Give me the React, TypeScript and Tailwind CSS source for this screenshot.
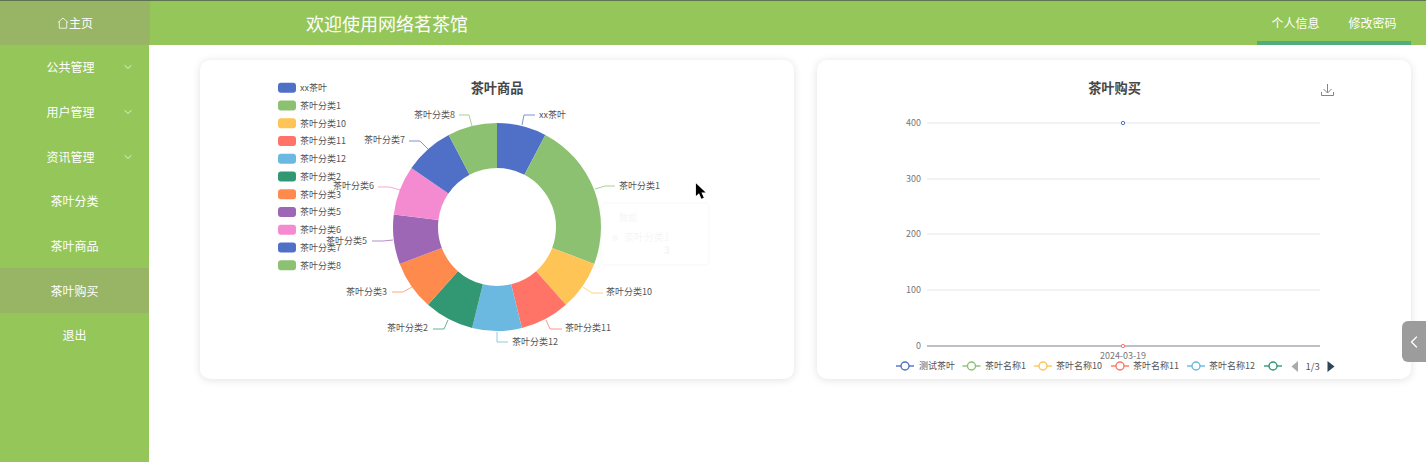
import { ChevronDown, ChevronLeft } from "lucide-react";

const menus = [
  { name: "公共管理", arrow: true },
  { name: "用户管理", arrow: true },
  { name: "资讯管理", arrow: true },
  { name: "茶叶分类" },
  { name: "茶叶商品" },
  { name: "茶叶购买", active: true },
  { name: "退出" },
];

const CX = 497;
const CY = 227;
const OUTER = 104;
const INNER = 59;

// lx/ly: label anchor, line: leader polyline
const slices = [
  { name: "xx茶叶", value: 1, color: "#5070c8", line: "522,125 524,115 535,115", lx: 539, ly: 115, anchor: "start" },
  { name: "茶叶分类1", value: 3, color: "#8dc172", line: "595,189 605,186 615,186", lx: 619, ly: 186, anchor: "start" },
  { name: "茶叶分类10", value: 1, color: "#ffc456", line: "583,287 592,293 603,293", lx: 606, ly: 292, anchor: "start" },
  { name: "茶叶分类11", value: 1, color: "#ff7466", line: "546,320 550,329 562,329", lx: 565, ly: 328, anchor: "start" },
  { name: "茶叶分类12", value: 1, color: "#6bb8e0", line: "497,332 497,342 508,342", lx: 512, ly: 342, anchor: "start" },
  { name: "茶叶分类2", value: 1, color: "#329873", line: "448,320 444,329 433,329", lx: 428, ly: 328, anchor: "end" },
  { name: "茶叶分类3", value: 1, color: "#ff8a4d", line: "412,287 403,292 392,292", lx: 387, ly: 292, anchor: "end" },
  { name: "茶叶分类5", value: 1, color: "#9e67b5", line: "393,240 383,241 372,241", lx: 367, ly: 241, anchor: "end" },
  { name: "茶叶分类6", value: 1, color: "#f48bd0", line: "400,190 390,187 378,187", lx: 374, ly: 186, anchor: "end" },
  { name: "茶叶分类7", value: 1, color: "#5070c8", line: "428,149 420,141 409,141", lx: 405, ly: 140, anchor: "end" },
  { name: "茶叶分类8", value: 1, color: "#8dc172", line: "472,126 469,115 459,115", lx: 455, ly: 115, anchor: "end" },
];

function polar(r: number, deg: number) {
  const a = (deg * Math.PI) / 180;
  return `${(CX + r * Math.sin(a)).toFixed(2)} ${(CY - r * Math.cos(a)).toFixed(2)}`;
}

function arc(from: number, to: number) {
  const big = to - from > 180 ? 1 : 0;
  return `M${polar(OUTER, from)}A${OUTER} ${OUTER} 0 ${big} 1 ${polar(OUTER, to)}L${polar(INNER, to)}A${INNER} ${INNER} 0 ${big} 0 ${polar(INNER, from)}Z`;
}

const PieChart = () => {
  const unit = 360 / slices.reduce((sum, s) => sum + s.value, 0);
  let angle = 0;
  return (
    <svg viewBox="200 60 594 319" className="block h-full w-full">
      <text x="497" y="93" textAnchor="middle" fontSize="13.2" fontWeight="700" fill="#464646">
        茶叶商品
      </text>
      {slices.map((s, i) => (
        <g key={s.name}>
          <rect x="278" y={82.7 + i * 17.75} width="18" height="10" rx="3" fill={s.color} />
          <text x="300" y={91 + i * 17.75} fontSize="9" fill="#555">
            {s.name}
          </text>
        </g>
      ))}
      {slices.map((s) => {
        const from = angle;
        angle += s.value * unit;
        return <path key={s.name} d={arc(from, angle)} fill={s.color} />;
      })}
      {slices.map((s) => (
        <g key={s.name}>
          <polyline points={s.line} fill="none" stroke={s.color} strokeOpacity="0.75" strokeWidth="1" />
          <text x={s.lx} y={s.ly + 3} textAnchor={s.anchor as "start" | "end"} fontSize="9" fill="#555">
            {s.name}
          </text>
        </g>
      ))}
      {/* tooltip fading out */}
      <g opacity="0.06">
        <rect x="601" y="203" width="108" height="62" rx="4" fill="#fff" stroke="#99a" />
        <text x="619" y="221" fontSize="9" fill="#667">
          数据
        </text>
        <circle cx="615" cy="238" r="3" fill="#8dc172" />
        <text x="624" y="241" fontSize="10" fill="#667">
          茶叶分类1
        </text>
        <text x="664" y="254" fontSize="10" fontWeight="700" fill="#667">
          3
        </text>
      </g>
    </svg>
  );
};

const gridLines = [
  { y: 123, label: "400" },
  { y: 179, label: "300" },
  { y: 234, label: "200" },
  { y: 290, label: "100" },
];

const lineLegend = [
  { name: "测试茶叶", color: "#5070c8", cx: 905, tx: 919 },
  { name: "茶叶名称1", color: "#8dc172", cx: 971.5, tx: 985 },
  { name: "茶叶名称10", color: "#ffc456", cx: 1043, tx: 1056 },
  { name: "茶叶名称11", color: "#ff7466", cx: 1120, tx: 1133 },
  { name: "茶叶名称12", color: "#6bb8e0", cx: 1196, tx: 1209 },
  { name: "", color: "#329873", cx: 1273, tx: 1287 },
];

const LineChart = () => (
  <svg viewBox="817 60 594 319" className="block h-full w-full">
    <text x="1114.5" y="93" textAnchor="middle" fontSize="13.2" fontWeight="700" fill="#464646">
      茶叶购买
    </text>
    <g fill="none" stroke="#777" strokeWidth="0.9">
      <path d="M1327.5 84v8.5M1323.5 89l4 4 4-4" />
      <path d="M1321.5 92v3.5h12V92" />
    </g>
    {gridLines.map((g) => (
      <g key={g.y}>
        <line x1="927" x2="1320" y1={g.y} y2={g.y} stroke="#e4e7ee" />
        <text x="921" y={g.y + 3} textAnchor="end" fontSize="9" fill="#777">
          {g.label}
        </text>
      </g>
    ))}
    <line x1="927" x2="1320" y1="346" y2="346" stroke="#7d8089" />
    <text x="921" y="349" textAnchor="end" fontSize="9" fill="#777">
      0
    </text>
    <text x="1123" y="359" textAnchor="middle" fontSize="9" fill="#777">
      2024-03-19
    </text>
    <circle cx="1123" cy="123" r="1.7" fill="#fff" stroke="#5070c8" />
    <circle cx="1123" cy="346" r="1.7" fill="#fff" stroke="#ff7466" />
    {lineLegend.map((l) => (
      <g key={l.cx}>
        <line x1={l.cx - 9} x2={l.cx + 9} y1="366" y2="366" stroke={l.color} strokeWidth="1.4" />
        <circle cx={l.cx} cy="366" r="4" fill="#fff" stroke={l.color} strokeWidth="1.4" />
        <text x={l.tx} y="369" fontSize="9" fill="#555">
          {l.name}
        </text>
      </g>
    ))}
    <polygon points="1298,361 1298,372 1291.5,366.5" fill="#aaa" />
    <text x="1305.5" y="370" fontSize="9.5" fill="#555">
      1/3
    </text>
    <polygon points="1327.5,361 1327.5,372 1334.5,366.5" fill="#2f4554" />
  </svg>
);

export default function App() {
  return (
    <div className="relative flex h-screen flex-col overflow-hidden bg-white font-['Noto_Sans_CJK_SC','Noto_Sans',sans-serif] text-xs text-white">
      <header className="flex h-[45px] shrink-0 border-t border-[#5f7350] bg-[#95c65a]">
        <div className="flex w-[150px] items-center justify-center bg-[#97b565]">
          <svg viewBox="0 0 12 12" className="h-3 w-3" fill="none" stroke="currentColor" strokeWidth="0.8">
            <path d="M.8 5.6 6 1l5.2 4.6M2.3 4.6v6.6h7.4V4.6" />
          </svg>
          <span>主页</span>
        </div>
        <h1 className="ml-[156px] self-center text-lg leading-none font-normal">欢迎使用网络茗茶馆</h1>
        <nav className="mr-[15px] ml-auto flex w-[154px] items-center justify-center gap-[29px] border-b-4 border-[#52ad7e] pt-[3px]">
          <span>个人信息</span>
          <span>修改密码</span>
        </nav>
      </header>
      <div className="flex min-h-0 flex-1">
        <aside className="w-[149px] shrink-0 bg-[#95c65a]">
          {menus.map((m) => (
            <div
              key={m.name}
              className={`relative flex h-[44.7px] items-center justify-center ${m.active ? "bg-[#97b565]" : ""}`}
            >
              <span className={m.arrow ? "mr-[8px]" : ""}>{m.name}</span>
              {m.arrow && <ChevronDown className="absolute left-[122px] h-3 w-3" strokeWidth={1.5} />}
            </div>
          ))}
        </aside>
        <main className="flex flex-1 items-start gap-[23px] pt-[15px] pr-[15px] pl-[51px]">
          <section className="h-[319px] flex-1 rounded-[10px] bg-white shadow-[0_1px_8px_rgba(0,0,0,0.12)]">
            <PieChart />
          </section>
          <section className="h-[319px] flex-1 rounded-[10px] bg-white shadow-[0_1px_8px_rgba(0,0,0,0.12)]">
            <LineChart />
          </section>
        </main>
      </div>
      <div className="absolute top-[321px] right-0 flex h-[41px] w-6 items-center justify-center rounded-l-md bg-[#9c9c9c]">
        <ChevronLeft className="h-5 w-5" strokeWidth={1.5} />
      </div>
      <svg viewBox="0 0 12 18" className="absolute top-[183px] left-[695px] h-[17px] w-[11px]">
        <path d="M1 0v14l3.4-3.2L7 17l2.6-1.2L7 10h4.6z" fill="#000" />
      </svg>
    </div>
  );
}
